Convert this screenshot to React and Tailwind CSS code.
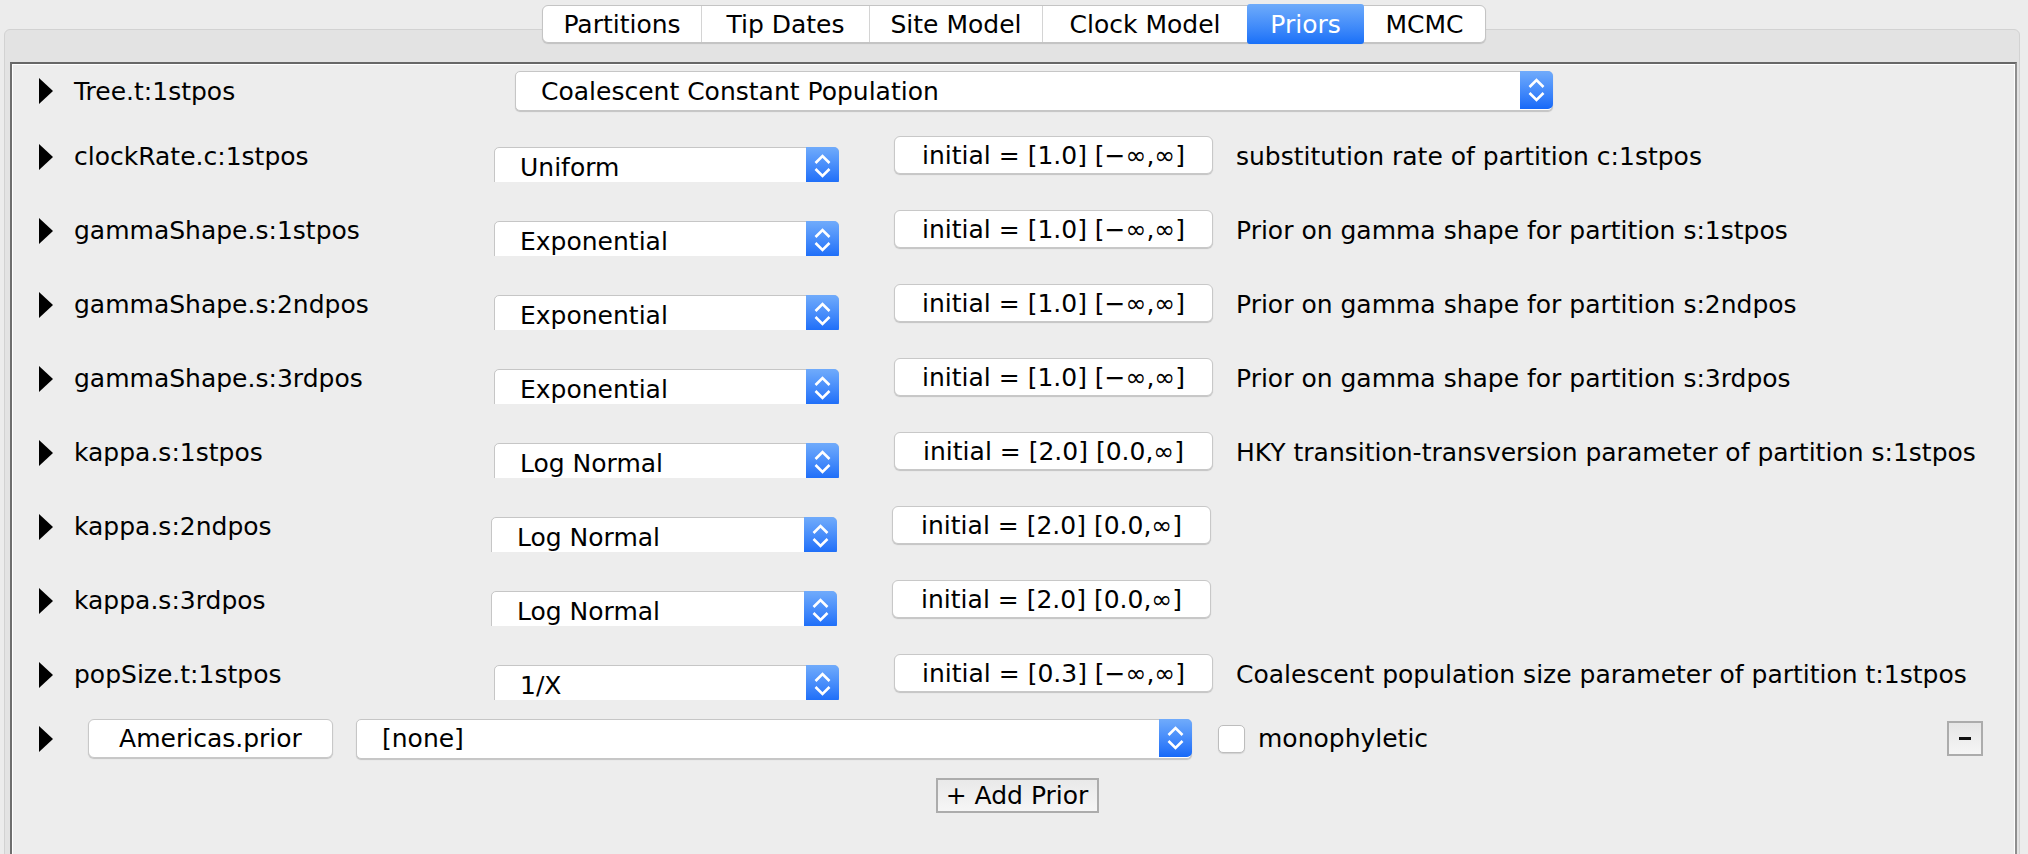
import React from "react";

const tabs = [
  { label: "Partitions", w: "w-[158px]" },
  { label: "Tip Dates", w: "w-[168px]" },
  { label: "Site Model", w: "w-[173px]" },
  { label: "Clock Model", w: "w-[205px]" },
  { label: "Priors", w: "w-[117px]", active: true },
  { label: "MCMC", w: "w-[121px]" },
];

const priors = [
  {
    name: "clockRate.c:1stpos",
    dist: "Uniform",
    init: "initial = [1.0] [−∞,∞]",
    desc: "substitution rate of partition c:1stpos",
  },
  {
    name: "gammaShape.s:1stpos",
    dist: "Exponential",
    init: "initial = [1.0] [−∞,∞]",
    desc: "Prior on gamma shape for partition s:1stpos",
  },
  {
    name: "gammaShape.s:2ndpos",
    dist: "Exponential",
    init: "initial = [1.0] [−∞,∞]",
    desc: "Prior on gamma shape for partition s:2ndpos",
  },
  {
    name: "gammaShape.s:3rdpos",
    dist: "Exponential",
    init: "initial = [1.0] [−∞,∞]",
    desc: "Prior on gamma shape for partition s:3rdpos",
  },
  {
    name: "kappa.s:1stpos",
    dist: "Log Normal",
    init: "initial = [2.0] [0.0,∞]",
    desc: "HKY transition-transversion parameter of partition s:1stpos",
  },
  {
    name: "kappa.s:2ndpos",
    dist: "Log Normal",
    init: "initial = [2.0] [0.0,∞]",
    desc: "",
    shift: true,
  },
  {
    name: "kappa.s:3rdpos",
    dist: "Log Normal",
    init: "initial = [2.0] [0.0,∞]",
    desc: "",
    shift: true,
  },
  {
    name: "popSize.t:1stpos",
    dist: "1/X",
    init: "initial = [0.3] [−∞,∞]",
    desc: "Coalescent population size parameter of partition t:1stpos",
  },
];

function Arrow() {
  return (
    <svg width="14" height="26" viewBox="0 0 14 26">
      <polygon points="0,0 14,13 0,26" fill="black" />
    </svg>
  );
}

function Stepper() {
  return (
    <div className="w-[33px] h-full shrink-0 -my-px -mr-px rounded-r-[5px] bg-linear-to-b from-[#70abfb] to-[#1669f8] flex items-center justify-center">
      <svg width="33" height="40" viewBox="0 0 33 40" fill="none" stroke="white" strokeWidth="2.6">
        <path d="M9.5 17 L16.5 10 L23.5 17" />
        <path d="M9.5 23 L16.5 30 L23.5 23" />
      </svg>
    </div>
  );
}

function Combo({ value, className = "" }) {
  return (
    <div
      className={`flex h-[40px] bg-white rounded-[5px] border border-[#c6c6c6] shadow-[0_1px_1px_rgba(0,0,0,0.18)] ${className}`}
    >
      <div className="flex-1 flex items-center pl-[25px] whitespace-nowrap">{value}</div>
      <Stepper />
    </div>
  );
}

function PriorRow({ p }) {
  return (
    <div className="flex h-[38px]">
      <div className="w-[61px] shrink-0 flex items-center pl-[26px] pt-[3px]">
        <Arrow />
      </div>
      <div className={`${p.shift ? "w-[417px]" : "w-[420px]"} shrink-0 flex items-center pt-[3px]`}>
        {p.name}
      </div>
      <div className={`${p.shift ? "w-[346px]" : "w-[345px]"} shrink-0 h-[35px] mt-[11px] overflow-hidden`}>
        <Combo value={p.dist} className="w-full" />
      </div>
      <div className="ml-[55px] w-[319px] shrink-0 h-[38px] bg-white rounded-[6px] border border-[#c8c8c8] shadow-[0_1px_1px_rgba(0,0,0,0.18)] flex items-center justify-center whitespace-nowrap">
        {p.init}
      </div>
      <div className="ml-[23px] flex items-center pt-[3px] whitespace-nowrap">{p.desc}</div>
    </div>
  );
}

export default function App() {
  return (
    <div className="w-[2028px] h-[854px] overflow-hidden bg-[#ececec] text-black text-[25px] leading-none font-['DejaVu_Sans',sans-serif] pt-[5px]">
      <div className="relative z-10 flex justify-center">
        <div className="flex h-[38px] bg-white rounded-[6px] border border-[#c4c4c4] shadow-[0_1px_1px_rgba(0,0,0,0.15)]">
          {tabs.map((t, i) => (
            <div
              key={t.label}
              className={`${t.w} flex items-center justify-center ${
                i > 0 && !t.active && !tabs[i - 1].active ? "border-l border-[#d4d4d4]" : ""
              } ${t.active ? "bg-linear-to-b from-[#6eabfa] to-[#1870f8] text-white -my-[2px] rounded-[3px]" : ""}`}
            >
              {t.label}
            </div>
          ))}
        </div>
      </div>

      <div className="-mt-[14px] ml-[4px] w-[2016px] h-[830px] bg-[#e3e3e3] rounded-t-[6px] border border-[#d2d2d2] pt-[32px] pl-[5px] pr-[2px]">
        <div className="h-full border-t-2 border-l-2 border-r-2 border-t-[#676767] border-l-[#6e6e6e] border-r-[#8f8f8f]">
          <div className="h-full border border-white bg-[#ededed] pt-[6px]">
            {/* tree prior */}
            <div className="flex h-[40px] items-center">
              <div className="w-[61px] shrink-0 flex items-center pl-[26px]">
                <Arrow />
              </div>
              <div className="w-[441px] shrink-0">Tree.t:1stpos</div>
              <Combo value="Coalescent Constant Population" className="w-[1038px]" />
            </div>

            <div className="mt-[25px] flex flex-col gap-[36px]">
              {priors.map((p) => (
                <PriorRow key={p.name} p={p} />
              ))}
            </div>

            {/* taxon set prior */}
            <div className="mt-[27px] flex h-[39px] items-center">
              <div className="w-[75px] shrink-0 flex items-center pl-[26px]">
                <Arrow />
              </div>
              <div className="w-[245px] h-[39px] shrink-0 bg-white rounded-[6px] border border-[#c8c8c8] shadow-[0_1px_1px_rgba(0,0,0,0.18)] flex items-center justify-center">
                Americas.prior
              </div>
              <Combo value="[none]" className="ml-[23px] w-[836px] h-[39px]" />
              <div className="ml-[26px] w-[27px] h-[28px] shrink-0 bg-white rounded-[5px] border border-[#bdbdbd] shadow-[0_1px_1px_rgba(0,0,0,0.12)]" />
              <div className="ml-[13px]">monophyletic</div>
              <div className="ml-auto mr-[31px] w-[36px] h-[35px] border-2 border-[#acacac] bg-linear-to-b from-[#e6e6e6] to-[#f5f5f5] flex items-center justify-center">
                <div className="w-[12px] h-[3px] bg-[#111]" />
              </div>
            </div>

            <div className="mt-[20px] flex justify-center pl-[7px]">
              <div className="w-[163px] h-[35px] border-2 border-[#acacac] bg-linear-to-b from-[#e9e9e9] to-[#f6f6f6] flex items-center justify-center whitespace-nowrap">
                + Add Prior
              </div>
            </div>
          </div>
        </div>
      </div>
    </div>
  );
}
